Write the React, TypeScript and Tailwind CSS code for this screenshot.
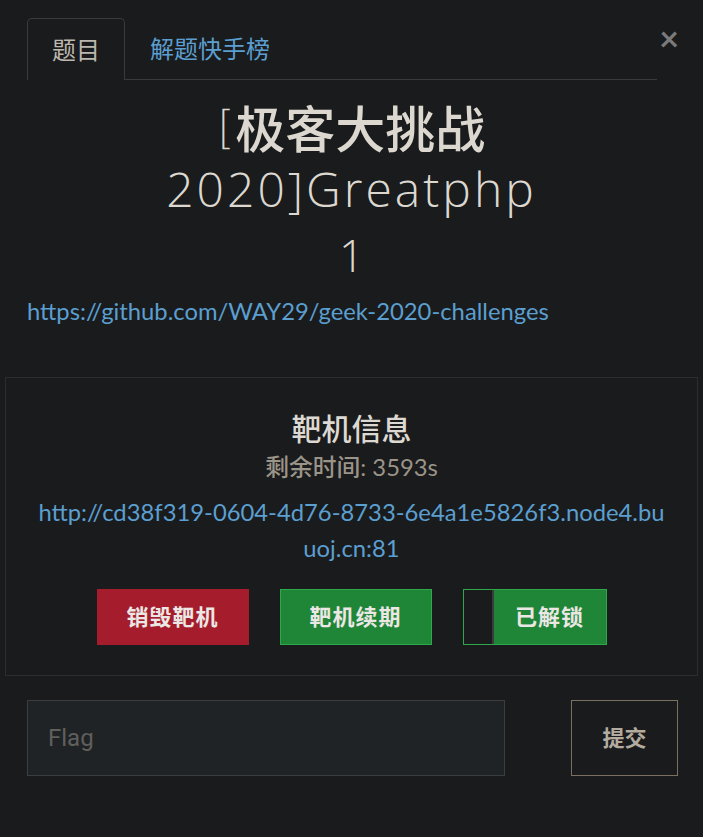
import React from 'react';

const latin = "font-['Lato','Noto_Sans_CJK_SC',sans-serif]";

const App = () => {
	return (
		<div className={`min-h-screen w-[703px] bg-[#1a1b1d] ${latin}`}>
			<div className="relative px-[27px] pt-[18px]">
				{/* tabs */}
				<div className="flex items-end border-b border-[#3a3b3d] w-[630px]">
					<div className="flex h-[62px] w-[98px] items-center justify-center rounded-t-[5px] border border-b-0 border-[#3a3b3d] text-[24px] text-[#bdb8ae] -mb-px bg-[#1a1b1d]">
						题目
					</div>
					<div className="flex h-[61px] items-center pl-[25px] text-[24px] text-[#5b9fd0]">解题快手榜</div>
				</div>
				<button className="absolute right-[24px] top-[21px] text-[34px] font-bold leading-none text-[#7a7a7a]">×</button>

				{/* title */}
				<h1 className="mt-[17px] text-center text-[#dcd8d0]">
					<span className="flex h-[58px] items-center justify-center">
						<span className="mr-[4px] text-[46px] font-light leading-[58px] font-['Lato',sans-serif]">[</span>
						<span className="text-[50px] font-medium leading-[58px] font-['Noto_Sans_CJK_SC',sans-serif]">极客大挑战</span>
					</span>
					<span className="mt-[7px] block text-[48px] font-light tracking-[3px] leading-[54px] font-['Open_Sans',sans-serif]">2020]Greatphp</span>
					<span className="block text-[44px] font-light leading-[78px] font-['Open_Sans',sans-serif]">1</span>
				</h1>
				<a className="block text-[23.8px] text-[#5b9fd0]">https://github.com/WAY29/geek-2020-challenges</a>
			</div>

			{/* target machine card */}
			<div className="mx-[5px] mt-[47px] border border-[#2c2d2f] pt-[30px] pb-[30px] text-center">
				<div className="text-[30px] font-medium text-[#ddd9d2] leading-[40px]">靶机信息</div>
				<div className="mt-[2px] text-[23.8px] text-[#9b9488] leading-[34px]">
					<span className="font-medium">剩余时间</span>: 3593s
				</div>
				<div className="mt-[10px] text-[23.8px] leading-[36px] text-[#5b9fd0]">
					<span className="block">http://cd38f319-0604-4d76-8733-6e4a1e5826f3.node4.bu</span>
					<span className="block">uoj.cn:81</span>
				</div>
				<div className="mt-[23px] flex justify-center gap-[31px]">
					<button className="h-[56px] w-[152px] bg-[#a51d2d] text-[22px] font-bold tracking-[1px] text-[#ebe7e4]">销毁靶机</button>
					<button className="h-[56px] w-[152px] border border-[#2fa84a] bg-[#1f8537] text-[22px] font-bold tracking-[1px] text-[#ebe7e4]">靶机续期</button>
					<button className="flex h-[56px] w-[144px] border border-[#2fa84a] bg-[#1f8537] text-[22px] font-bold tracking-[1px] text-[#ebe7e4]">
						<span className="h-full w-[30px] border-r-2 border-[#3a3b3d] bg-[#1a1b1d]" />
						<span className="flex flex-1 items-center justify-center">已解锁</span>
					</button>
				</div>
			</div>

			{/* flag form */}
			<div className="mt-[24px] flex items-center pl-[27px] pr-[25px]">
				<input
					placeholder="Flag"
					className="h-[76px] w-[478px] border border-[#3b3e41] bg-[#1f2326] px-[20px] text-[24px] text-[#ccc] placeholder-[#5f5f5c] outline-none font-['Liberation_Sans_Narrow','Roboto',sans-serif]"
				/>
				<button className="ml-auto h-[76px] w-[107px] border border-[#7b6f62] text-[22px] font-bold text-[#b3ab9d]">提交</button>
			</div>
		</div>
	);
};

export default App;
